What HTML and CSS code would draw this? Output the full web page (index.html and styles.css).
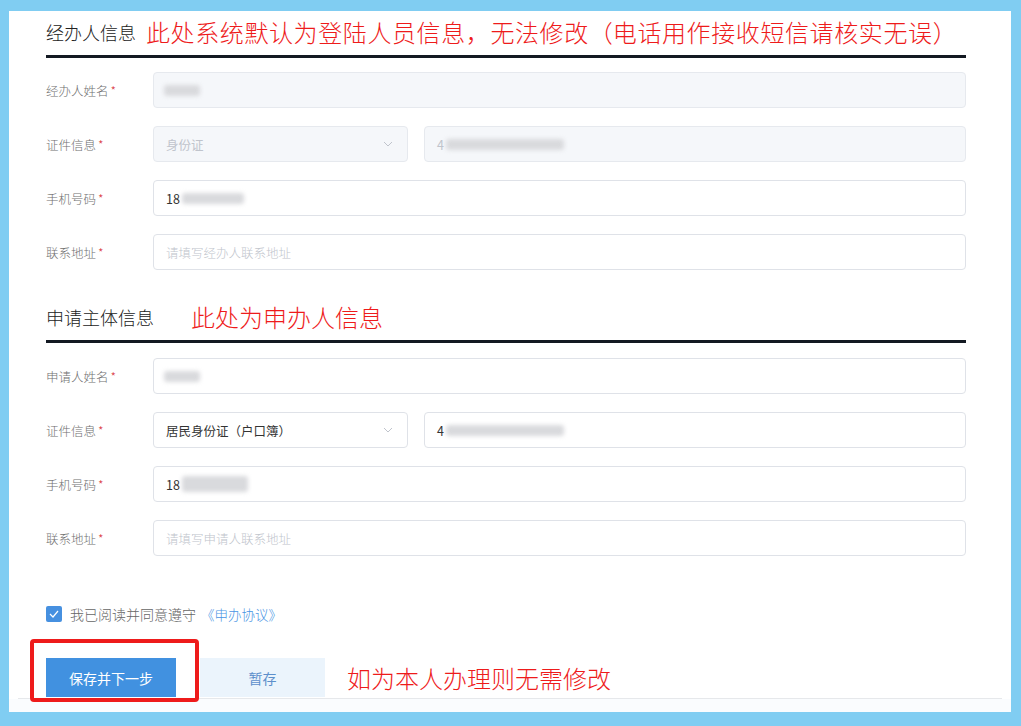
FILE: index.html
```html
<!DOCTYPE html>
<html lang="zh-CN">
<head>
    <meta charset="UTF-8">
    <meta name="viewport" content="width=device-width, initial-scale=1.0">
    <title>申办信息</title>
    <link rel="stylesheet" href="styles.css">
</head>
<body>
    <div class="panel">

        <div class="section-head first">
            <h3>经办人信息</h3>
            <span class="note note-long">此处系统默认为登陆人员信息，无法修改<b class="fw">（</b>电话用作接收短信请核实无误<b class="fw">）</b></span>
        </div>

        <div class="form">
            <div class="row">
                <label>经办人姓名<i>*</i></label>
                <div class="field disabled"><span class="blur blur-name"></span></div>
            </div>
            <div class="row">
                <label>证件信息<i>*</i></label>
                <div class="field select disabled">
                    <span>身份证</span>
                    <svg class="arrow" width="10" height="6" viewBox="0 0 10 6"><polyline points="1,1 5,5 9,1" fill="none" stroke="#c0c4cc" stroke-width="1"/></svg>
                </div>
                <div class="field idno disabled"><span>4</span><span class="blur blur-id"></span></div>
            </div>
            <div class="row">
                <label>手机号码<i>*</i></label>
                <div class="field"><span class="value">18</span><span class="blur blur-phone"></span></div>
            </div>
            <div class="row">
                <label>联系地址<i>*</i></label>
                <div class="field"><span class="placeholder">请填写经办人联系地址</span></div>
            </div>
        </div>

        <div class="section-head second">
            <h3>申请主体信息</h3>
            <span class="note note-short">此处为申办人信息</span>
        </div>

        <div class="form">
            <div class="row">
                <label>申请人姓名<i>*</i></label>
                <div class="field"><span class="blur blur-name"></span></div>
            </div>
            <div class="row">
                <label>证件信息<i>*</i></label>
                <div class="field select">
                    <span class="value">居民身份证<b class="fw">（</b>户口簿<b class="fw">）</b></span>
                    <svg class="arrow" width="10" height="6" viewBox="0 0 10 6"><polyline points="1,1 5,5 9,1" fill="none" stroke="#c0c4cc" stroke-width="1"/></svg>
                </div>
                <div class="field idno"><span class="value">4</span><span class="blur blur-id"></span></div>
            </div>
            <div class="row">
                <label>手机号码<i>*</i></label>
                <div class="field"><span class="value">18</span><span class="blur blur-phone2"></span></div>
            </div>
            <div class="row">
                <label>联系地址<i>*</i></label>
                <div class="field"><span class="placeholder">请填写申请人联系地址</span></div>
            </div>
        </div>

        <div class="agree">
            <span class="checkbox">
                <svg width="16" height="16" viewBox="0 0 16 16"><polyline points="4,8 7,11 12,5" fill="none" stroke="#fff" stroke-width="1.2"/></svg>
            </span>
            <span class="agree-text">我已阅读并同意遵守</span>
            <a class="agree-link">《申办协议》</a>
        </div>

        <div class="actions">
            <button class="btn btn-primary">保存并下一步</button>
            <button class="btn btn-plain">暂存</button>
            <span class="note note-btn">如为本人办理则无需修改</span>
            <div class="mark"></div>
        </div>

        <div class="foot"></div>

    </div>
</body>
</html>
```

FILE: styles.css
```css
html, body {
    margin: 0;
    padding: 0;
}

body {
    background-color: #80cdf2;
    padding: 11px 10px 14px 9px;
    font-family: "Noto Sans CJK SC", "Microsoft YaHei", sans-serif;
}

.panel {
    background-color: #fff;
}

/* full width brackets, centred in their em box */
.fw {
    display: inline-block;
    width: 1em;
    text-align: center;
    font-weight: inherit;
}

.section-head {
    display: flex;
    align-items: center;
    margin: 0 45px 0 37px;
    border-bottom: 3px solid #131922;
    line-height: 32px;
    padding-bottom: 7px;
}

.section-head.first {
    padding-top: 5px;
}

.section-head.second {
    padding-top: 31px;
}

.section-head h3 {
    margin: 0;
    font-size: 18px;
    font-weight: 300;
    color: #222;
}

.note {
    color: #ee1b1b;
    font-size: 24px;
    font-weight: 300;
    white-space: nowrap;
}

.note-long {
    margin-left: 10px;
    letter-spacing: 0.6px;
}

.note-short {
    margin-left: 37px;
}

.form {
    display: flex;
    flex-direction: column;
    gap: 18px;
    margin: 14px 45px 0 37px;
}

.section-head.second + .form {
    margin-top: 15px;
}

.row {
    display: flex;
    align-items: center;
    gap: 16px;
}

.row label {
    width: 107px;
    margin-right: -16px;
    font-size: 12.5px;
    font-weight: 300;
    color: #707070;
}

.row label i {
    font-style: normal;
    color: #d9363e;
    margin-left: 2px;
}

.field {
    flex: 1;
    height: 34px;
    border: 1px solid #dfe2e8;
    border-radius: 4px;
    display: flex;
    align-items: center;
    padding: 0 12px;
    font-size: 12.5px;
    color: #333;
}

.field.disabled {
    background-color: #f5f7fa;
    border-color: #e6e9ee;
    color: #c0c4cc;
}

.field.select {
    flex: 0 0 229px;
    justify-content: space-between;
}

.arrow {
    margin-right: 2px;
}

.placeholder {
    color: #c0c4cc;
    font-weight: 300;
}

.blur {
    display: inline-block;
    height: 11px;
    background-color: #d9dadd;
    border-radius: 3px;
    filter: blur(2px);
}

.blur-name {
    width: 36px;
    margin-left: -2px;
}

.blur-id {
    width: 118px;
    margin-left: 2px;
}

.blur-phone {
    width: 62px;
    margin-left: 2px;
}

.blur-phone2 {
    width: 66px;
    margin-left: 2px;
    height: 16px;
}

.agree {
    display: flex;
    align-items: center;
    margin: 50px 0 0 37px;
    height: 16px;
}

.checkbox {
    width: 16px;
    height: 16px;
    background-color: #4690e0;
    border-radius: 2px;
    margin-right: 8px;
}

.checkbox svg {
    display: block;
}

.agree-text {
    font-size: 14px;
    font-weight: 300;
    color: #666;
}

.agree-link {
    margin-left: 5px;
    font-size: 13.5px;
    font-weight: 300;
    color: #4a95e4;
    cursor: pointer;
}

.actions {
    position: relative;
    display: flex;
    align-items: center;
    margin: 36px 9px 0 9px;
    padding: 0 0 1px 28px;
    border-bottom: 1px solid #e6e8eb;
}

.btn {
    height: 39px;
    border: none;
    border-radius: 0;
    font-family: inherit;
    font-size: 14px;
    cursor: pointer;
}

.btn-primary {
    width: 130px;
    background-color: #4191e0;
    color: #fff;
}

.btn-plain {
    width: 125px;
    margin-left: 24px;
    background-color: #ebf4fc;
    color: #5d8fcb;
}

.note-btn {
    margin-left: 22px;
    line-height: 30px;
}

/* red frame drawn over the primary button */
.mark {
    position: absolute;
    left: 12px;
    top: -19px;
    width: 161px;
    height: 55px;
    border: 4px solid #ee1b1b;
    border-radius: 4px;
    pointer-events: none;
}

.foot {
    height: 13px;
    background-color: #fafcfe;
}
```
